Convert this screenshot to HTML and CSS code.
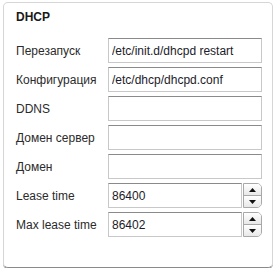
FILE: index.html
```html
<!DOCTYPE html>
<html lang="ru">
<head>
    <meta charset="UTF-8">
    <title>DHCP</title>
    <link rel="stylesheet" href="styles.css">
</head>
<body>
    <div class="panel">
        <h3 class="panel-title">DHCP</h3>
        <div class="fields">
            <label class="field-label" for="restart">Перезапуск</label>
            <input class="field-input" id="restart" type="text" value="/etc/init.d/dhcpd restart">

            <label class="field-label" for="config">Конфигурация</label>
            <input class="field-input" id="config" type="text" value="/etc/dhcp/dhcpd.conf">

            <label class="field-label" for="ddns">DDNS</label>
            <input class="field-input" id="ddns" type="text" value="">

            <label class="field-label" for="dnsServer">Домен сервер</label>
            <input class="field-input" id="dnsServer" type="text" value="">

            <label class="field-label" for="domain">Домен</label>
            <input class="field-input" id="domain" type="text" value="">

            <label class="field-label" for="lease">Lease time</label>
            <div class="spin">
                <input class="field-input spin-input" id="lease" type="text" value="86400">
                <div class="spin-buttons">
                    <span class="spin-btn"><svg width="7" height="4" viewBox="0 0 7 4"><path d="M0 4 L3.5 0 L7 4 Z" fill="#111"/></svg></span>
                    <span class="spin-btn"><svg width="7" height="4" viewBox="0 0 7 4"><path d="M0 0 L7 0 L3.5 4 Z" fill="#111"/></svg></span>
                </div>
            </div>

            <label class="field-label" for="maxLease">Max lease time</label>
            <div class="spin">
                <input class="field-input spin-input" id="maxLease" type="text" value="86402">
                <div class="spin-buttons">
                    <span class="spin-btn"><svg width="7" height="4" viewBox="0 0 7 4"><path d="M0 4 L3.5 0 L7 4 Z" fill="#111"/></svg></span>
                    <span class="spin-btn"><svg width="7" height="4" viewBox="0 0 7 4"><path d="M0 0 L7 0 L3.5 4 Z" fill="#111"/></svg></span>
                </div>
            </div>
        </div>
    </div>
</body>
</html>
```

FILE: styles.css
```css
body {
    margin: 0;
    padding: 2px 2px 0 3px;
    background: #fff;
    font-family: "Liberation Sans", Arial, sans-serif;
    font-size: 12px;
    color: #333;
}
.panel {
    width: 270px;
    height: 266px;
    box-sizing: border-box;
    border: 1px solid #d6d6d6;
    border-bottom-color: #8a8a8a;
    border-radius: 5px;
    box-shadow: 0 1px 0 #8c8c8c;
    padding: 7px 10px 0 12px;
}
.panel-title {
    margin: 0 0 14px 0;
    font-size: 12px;
    line-height: 14px;
    font-weight: bold;
    color: #1a1a1a;
}
.fields {
    display: grid;
    grid-template-columns: 92px minmax(0, 1fr);
    grid-auto-rows: 25px;
    row-gap: 4px;
    align-items: center;
}
.field-label {
    color: #2b2b2b;
    white-space: nowrap;
}
.field-input {
    height: 25px;
    width: 100%;
    min-width: 0;
    box-sizing: border-box;
    margin: 0;
    padding: 0 3px;
    border: 1px solid #c8c8c8;
    border-top-color: #8a8a8a;
    border-radius: 0;
    font-family: "Liberation Sans", Arial, sans-serif;
    font-size: 12px;
    color: #1c1c2a;
    outline: none;
}
.spin {
    display: flex;
    height: 25px;
    min-width: 0;
}
.spin-input {
    flex: 1;
    width: auto;
}
.spin-buttons {
    flex: none;
    width: 19px;
    margin-left: 1px;
    display: flex;
    flex-direction: column;
    box-sizing: border-box;
    border: 1px solid #a8a8a8;
    border-radius: 0 5px 5px 0;
    overflow: hidden;
}
.spin-btn {
    flex: 1;
    display: flex;
    align-items: center;
    justify-content: center;
    background: linear-gradient(#ffffff, #e8e8e8);
}
.spin-btn + .spin-btn {
    border-top: 1px solid #a8a8a8;
}
```
